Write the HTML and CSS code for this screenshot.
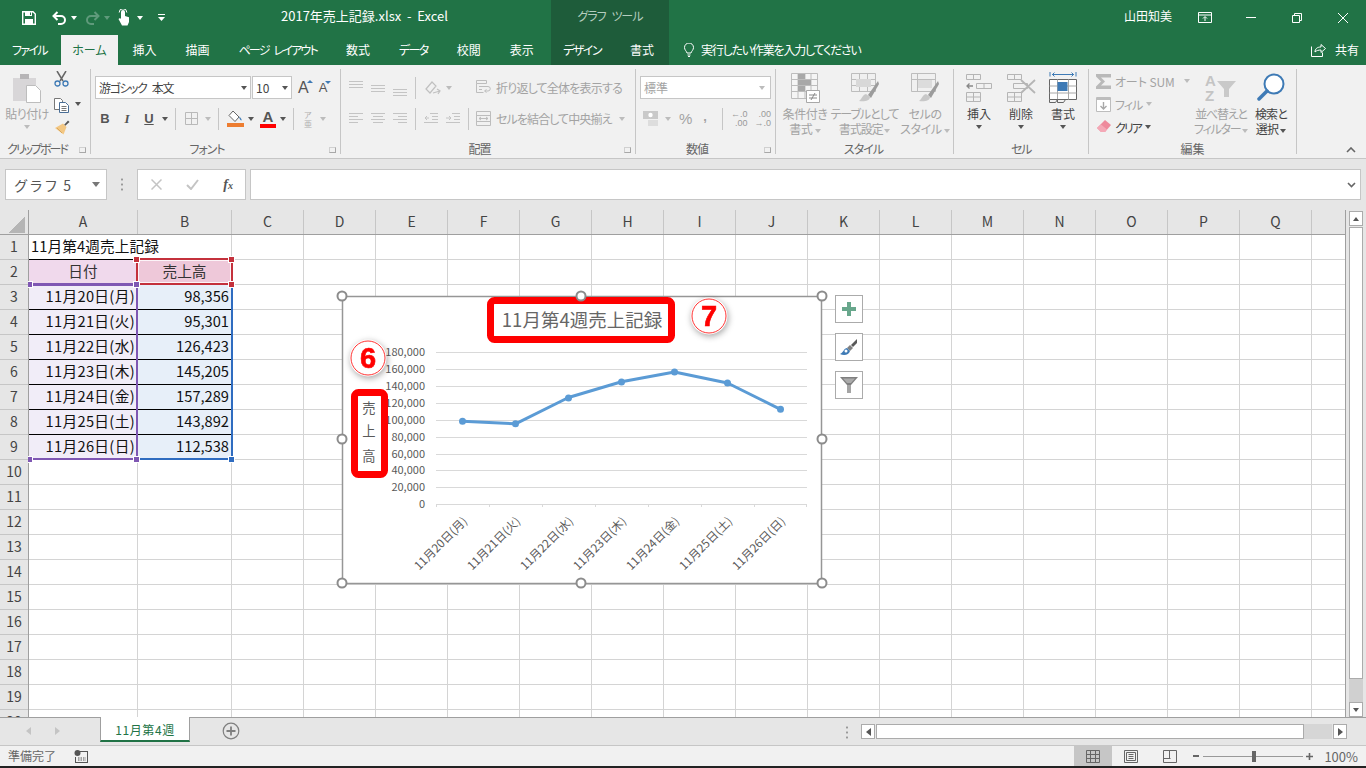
FILE: index.html
```html
<!DOCTYPE html>
<html lang="ja">
<head>
    <meta charset="UTF-8">
    <title>2017年売上記録.xlsx - Excel</title>
    <link rel="stylesheet" href="styles.css">
</head>
<body>
    <header class="titlebar">
        <div class="title-left">
            <svg class="qat-save" width="14" height="14" viewBox="0 0 14 14"><path d="M.7.7H11L13.3 3V13.3H.7Z" fill="none" stroke="#fff" stroke-width="1.4"/><path d="M3 1h7v4H3zM3 8h8v5H3z" fill="#fff"/><path d="M8 1.5h1v2.5H8z" fill="#217346"/></svg>
            <svg class="qat-undo" width="14" height="14" viewBox="0 0 14 14"><path d="M5.5 1 1.5 5l4 4M1.5 5H9a3.8 3.8 0 0 1 0 8H6" fill="none" stroke="#fff" stroke-width="2"/></svg>
            <i class="caret white qat-c1"></i>
            <svg class="qat-redo" width="14" height="14" viewBox="0 0 14 14"><path d="M8.500 1l4 4-4 4M12.500 5H5a3.800 3.800 0 0 0 0 8h3" fill="none" stroke="#5f9a7b" stroke-width="2"/></svg>
            <i class="caret dim qat-c2"></i>
            <svg class="qat-touch" width="12" height="17" viewBox="0 0 12 17"><path d="M3 3a2 2 0 0 1 4 0V7l4 1.200V13l-1.500 3.500H4L.5 10 2 9l1 1z" fill="#fff"/><path d="M1.200 3.500a3.800 3.800 0 0 1 7.600 0" fill="none" stroke="#fff"/></svg>
            <i class="caret white qat-c3"></i>
            <svg class="qat-more" width="7" height="8" viewBox="0 0 7 8"><path d="M0 0h7v1H0zM0 3h7L3.500 7z" fill="#fff"/></svg>
            <span class="doc-title">2017年売上記録.xlsx&nbsp; - &nbsp;Excel</span>
        </div>
        <div class="ctx-title">グラフ ツール</div>
        <div class="title-right">
            <span class="user">山田知美</span>
            <span class="winbtn"><svg width="14" height="11" viewBox="0 0 14 11"><path d="M.5.5h13v10H.5zM.5 3h13M7 9V5M5 6.500l2-2 2 2" fill="none" stroke="#fff"/></svg></span>
            <span class="winbtn"><svg width="10" height="1" viewBox="0 0 10 1"><path d="M0 0h10v1H0z" fill="#fff"/></svg></span>
            <span class="winbtn"><svg width="10" height="10" viewBox="0 0 10 10"><path d="M.5 2.500h7v7h-7zM2.500 2.500v-2h7v7h-2" fill="none" stroke="#fff"/></svg></span>
            <span class="winbtn"><svg width="10" height="10" viewBox="0 0 10 10"><path d="M0 0l10 10M10 0 0 10" stroke="#fff"/></svg></span>
        </div>
    </header>

    <nav class="tabs">
        <div class="main-tabs">
            <span class="tab file">ファイル</span>
            <span class="tab active">ホーム</span>
            <span class="tab">挿入</span>
            <span class="tab">描画</span>
            <span class="tab page-tab">ページ レイアウト</span>
            <span class="tab">数式</span>
            <span class="tab data-tab">データ</span>
            <span class="tab">校閲</span>
            <span class="tab">表示</span>
        </div>
        <div class="ctx-tabs">
            <span class="tab design-tab">デザイン</span>
            <span class="tab">書式</span>
        </div>
        <div class="tell-me">
            <svg width="10" height="14" viewBox="0 0 10 14"><path d="M3 10C2.500 8 .5 7 .5 4.500a4.500 4.500 0 0 1 9 0C9.500 7 7.500 8 7 10zM3.500 12h3M4 13.500h2" fill="none" stroke="#fff"/></svg>
            <span>実行したい作業を入力してください</span>
        </div>
        <div class="share">
            <svg width="15" height="14" viewBox="0 0 15 14"><path d="M.5 3.500v10h11v-4M4 9c0-3 2-5 6-5V1.500l4.500 4-4.500 4V7C7.500 7 5.500 7.500 4 9z" fill="none" stroke="#fff"/></svg>
            <span>共有</span>
        </div>
    </nav>

    <section class="ribbon">
        <div class="group g-clip">
            <div class="body row">
                <div class="big w42 off">
                    <svg width="30" height="30" viewBox="0 0 30 30"><path d="M1 5h23v23H1z" fill="#d8d6d8"/><path d="M8 1h9v5H8z" fill="#b7b5b7"/><path d="M14.500 12.500h9l5 5v12h-14z" fill="#fff" stroke="#bdbdbd"/></svg>
                    <span>貼り付け</span>
                    <i class="caret dim mt"></i>
                </div>
                <div class="smallcol">
                    <svg width="15" height="16" viewBox="0 0 15 16"><path d="M3 0l6 10M12 0 6 10" stroke="#666" stroke-width="1.500"/><circle cx="3.500" cy="12.500" r="2.500" fill="none" stroke="#3e7ab5" stroke-width="1.300"/><circle cx="11.500" cy="12.500" r="2.500" fill="none" stroke="#3e7ab5" stroke-width="1.300"/></svg>
                    <div class="row-c">
                        <svg width="15" height="15" viewBox="0 0 15 15"><path d="M.5.500h6l2 2v9h-8z" fill="#fff" stroke="#777"/><path d="M5.500 4.500h6l3 3v7h-9z" fill="#fff" stroke="#4a6e96"/><path d="M7.500 8.500h5M7.500 10.500h5M7.500 12.500h5" stroke="#777"/></svg>
                        <i class="caret dark ml6"></i>
                    </div>
                    <svg width="16" height="15" viewBox="0 0 16 15"><path d="M10 5l4-4.500 1.500 1.500L11 6z" fill="#555"/><path d="M9 3.500l3.500 3.500-3 7.500L1 8z" fill="#f3c783"/><path d="M3 8l5 5" stroke="#d9a85e"/></svg>
                </div>
            </div>
            <div class="label clip-label">クリップボード</div>
            <i class="launcher"></i>
        </div>

        <div class="group g-font">
            <div class="stack">
                <div class="line pl4">
                    <div class="combo font-name"><span>游ゴシック 本文</span><i class="caret dark"></i></div>
                    <div class="combo font-size"><span>10</span><i class="caret dark"></i></div>
                    <span class="grow-a up">A<i></i></span>
                    <span class="grow-a down">A<i></i></span>
                </div>
                <div class="line pl3">
                    <span class="fmt bold">B</span>
                    <span class="fmt ital">I</span>
                    <span class="fmt under">U</span>
                    <i class="caret dark w12"></i>
                    <i class="vsep s1"></i>
                    <svg class="ic-border" width="13" height="13" viewBox="0 0 13 13"><path d="M.5.500h12v12H.5zM6.500.500v12M.5 6.500h12" fill="none" stroke="#b9b9b9"/></svg>
                    <i class="caret dim ml7"></i>
                    <i class="vsep s2"></i>
                    <svg class="ic-fill" width="17" height="17" viewBox="0 0 17 17"><path d="M6 1l6 6-4 4.500-6-6z" fill="#fff" stroke="#666"/><path d="M12 6.500c2 1.500 3 3 2.500 4-1 0-2-1.500-2.500-4z" fill="#3e7ab5"/><path d="M0 13h17v4H0z" fill="#ed7d31"/></svg>
                    <i class="caret dark ml4"></i>
                    <span class="ic-color">A</span>
                    <i class="caret dark ml4"></i>
                    <i class="vsep s3"></i>
                    <span class="ruby">ア<br>亜</span>
                    <i class="caret dim ml8"></i>
                </div>
            </div>
            <div class="label side">フォント</div>
            <i class="launcher"></i>
        </div>

        <div class="group g-align">
            <div class="body row">
                <div class="stack c-align">
                    <div class="line gap8">
                        <svg width="14" height="16" viewBox="0 0 14 16"><path d="M0 1.500h14M0 4.500h14M0 7.500h14" stroke="#c4c4c4"/></svg>
                        <svg width="14" height="16" viewBox="0 0 14 16"><path d="M0 5.500h14M0 8.500h14M0 11.500h14" stroke="#c4c4c4"/></svg>
                        <svg width="14" height="16" viewBox="0 0 14 16"><path d="M0 9.500h14M0 12.500h14M0 15.500h14" stroke="#c4c4c4"/></svg>
                        <i class="vsep"></i>
                        <svg width="17" height="16" viewBox="0 0 17 16"><path d="M2 9l6-7 4 4-6 7zM9 13l7-2M13 9l3 2-2 3" fill="none" stroke="#c0c0c0" stroke-width="1.200"/></svg>
                        <i class="caret dim ml-3"></i>
                    </div>
                    <div class="line gap8">
                        <svg width="14" height="13" viewBox="0 0 14 13"><path d="M0 1.500h14M0 4.500h9M0 7.500h14M0 10.500h9" stroke="#c4c4c4"/></svg>
                        <svg width="14" height="13" viewBox="0 0 14 13"><path d="M0 1.500h14M2 4.500h10M0 7.500h14M2 10.500h10" stroke="#c4c4c4"/></svg>
                        <svg width="14" height="13" viewBox="0 0 14 13"><path d="M0 1.500h14M5 4.500h9M0 7.500h14M5 10.500h9" stroke="#c4c4c4"/></svg>
                        <i class="vsep"></i>
                        <svg width="14" height="13" viewBox="0 0 14 13"><path d="M6 1.500h8M8 4.500h6M8 7.500h6M0 10.500h14M5 6H1M3 4 1 6l2 2" fill="none" stroke="#c4c4c4"/></svg>
                        <svg width="14" height="13" viewBox="0 0 14 13"><path d="M6 1.500h8M8 4.500h6M8 7.500h6M0 10.500h14M0 6h4M3 4l2 2-2 2" fill="none" stroke="#c4c4c4"/></svg>
                        <i class="vsep"></i>
                    </div>
                </div>
                <div class="stack">
                    <div class="line off txt12">
                        <svg class="mr5" width="15" height="15" viewBox="0 0 15 15"><path d="M.5.500h10v3H.5zM.5 3.500v9h7M3 6.500h9a2 2 0 0 1 0 4.500H9M3 9.500h3M10.500 9.500 8.500 11l2 1.500" fill="none" stroke="#bdbdbd"/></svg>
                        <span class="wrap-text">折り返して全体を表示する</span>
                    </div>
                    <div class="line off txt12">
                        <svg class="mr5" width="15" height="15" viewBox="0 0 15 15"><path d="M.5.500h14v14H.5zM.5 4.500h14M.5 10.500h14M3 7.500h9M5 6 3 7.500 5 9M10 6l2 1.500L10 9" fill="none" stroke="#bdbdbd"/></svg>
                        <span class="merge-text">セルを結合して中央揃え</span>
                        <i class="caret dim ml7"></i>
                    </div>
                </div>
            </div>
            <div class="label side">配置</div>
            <i class="launcher"></i>
        </div>

        <div class="group g-num">
            <div class="stack">
                <div class="line pl4">
                    <div class="combo num-format off"><span>標準</span><i class="caret dim"></i></div>
                </div>
                <div class="line pl7 off">
                    <svg width="16" height="15" viewBox="0 0 16 15"><path d="M0 0h15v8H0z" fill="#c9c9c9"/><circle cx="7.500" cy="4" r="2.200" fill="#fff"/><path d="M5 10h10M5 12h10M5 14h10" stroke="#c9c9c9"/></svg>
                    <i class="caret dim ml6"></i>
                    <span class="pct">%</span>
                    <span class="comma">,</span>
                    <i class="vsep s4"></i>
                    <span class="dec">←.0<br>.00</span>
                    <span class="dec d2">.00<br>→.0</span>
                </div>
            </div>
            <div class="label side">数値</div>
            <i class="launcher"></i>
        </div>

        <div class="group g-style">
            <div class="body row">
                <div class="big w54 off">
                    <svg width="30" height="30" viewBox="0 0 30 30"><path d="M1.500.500h26v25h-26zM1.500 6.500h26M1.500 12.500h26M1.500 18.500h26M8 .500v25M15 .500v25M21 .500v25" fill="#f5f5f5" stroke="#bdbdbd"/><path d="M8 1h7v5H8zM8 7h13v5H8zM8 13h7v5H8z" fill="#a8a8a8"/><path d="M16.500 17.500h13v12h-13z" fill="#fff" stroke="#a8a8a8"/><path d="M19 22h8M19 25h8M25 20l-4 7" stroke="#888" fill="none"/></svg>
                    <span>条件付き<br>書式 <i class="caret dim"></i></span>
                </div>
                <div class="big w65 off">
                    <svg width="30" height="30" viewBox="0 0 30 30"><path d="M1.500.500h24v18h-24zM1.500 6.500h24M1.500 12.500h24M9.500.500v18M17.500.500v18" fill="#f0f0f0" stroke="#bdbdbd"/><path d="M6 6h15v8H6z" fill="#d8d8d8"/><path d="M28 8 18 22l3 3 8-14z" fill="#9c9c9c"/><path d="M16 21c-4 1-4 5-7 7 5 1 11 0 11-4z" fill="#c8c8c8"/></svg>
                    <span class="table-label">テーブルとして<br>書式設定 <i class="caret dim"></i></span>
                </div>
                <div class="big w56 off">
                    <svg width="30" height="30" viewBox="0 0 30 30"><path d="M1.500.500h24v18h-24zM1.500 6.500h24M7.500.500v18" fill="#f0f0f0" stroke="#bdbdbd"/><path d="M8 7h14v8H8z" fill="#dcdcdc"/><path d="M28 8 18 22l3 3 8-14z" fill="#9c9c9c"/><path d="M16 21c-4 1-4 5-7 7 5 1 11 0 11-4z" fill="#c8c8c8"/></svg>
                    <span>セルの<br>スタイル <i class="caret dim"></i></span>
                </div>
            </div>
            <div class="label">スタイル</div>
        </div>

        <div class="group g-cell">
            <div class="body row">
                <div class="big w42">
                    <svg width="30" height="30" viewBox="0 0 30 30"><path d="M2.500 1.500h14v5h-14zM9.500 1.500v5M2.500 19.500h14v9h-14zM9.500 19.500v9M2.500 24h14M12.500 10.500h15v5h-15zM20 10.500v5" fill="none" stroke="#b5b5b5"/><path d="M9 13H3M5.500 10.500 3 13l2.500 2.500" fill="none" stroke="#888" stroke-width="1.300"/></svg>
                    <span>挿入</span>
                    <i class="caret dark mt"></i>
                </div>
                <div class="big w42">
                    <svg width="30" height="30" viewBox="0 0 30 30"><path d="M1.500 1.500h14v5h-14zM8.500 1.500v5M1.500 19.500h14v9h-14zM8.500 19.500v9M1.500 24h14M7.500 10.500h14v5h-14z" fill="none" stroke="#b5b5b5"/><path d="M15 7l14 13M29 7 15 20" stroke="#b5b5b5" stroke-width="1.800"/></svg>
                    <span>削除</span>
                    <i class="caret dark mt"></i>
                </div>
                <div class="big w42 cell-format">
                    <svg width="28" height="33" viewBox="0 0 28 33"><path d="M1 5.500V1M27 5.500V1M3 3.500h22M5.500 1.500l-2 2 2 2M22.500 1.500l2 2-2 2" fill="none" stroke="#3e7ab5"/><path d="M.5 8.500h27v20H.5z" fill="#fff" stroke="#666"/><path d="M8.500 8.500v20M19.500 8.500v20M.5 15h27M.5 22h27" stroke="#a8a8a8"/><path d="M8.500 11h10v9h-10z" fill="#3e7ab5"/><path d="M.5 28.500v3h6l2-3M8.500 28.500v3h6l2-3" fill="none" stroke="#666"/></svg>
                    <span>書式</span>
                    <i class="caret dark mt"></i>
                </div>
            </div>
            <div class="label">セル</div>
        </div>

        <div class="group g-edit">
            <div class="body row">
                <div class="editcol">
                    <div class="eline off">
                        <svg class="sigma" width="15" height="15" viewBox="0 0 15 15"><path d="M0 0h15v3.500H5L9 7.500 5 11.500h10V15H0v-2.500L5 7.500 0 2.500z" fill="#b9b9b9"/></svg>
                        <span class="autosum">オート SUM</span>
                        <i class="caret dim ml9"></i>
                    </div>
                    <div class="eline off">
                        <svg class="sigma" width="15" height="15" viewBox="0 0 15 15"><path d="M.5.500h14v14H.5z" fill="#fff" stroke="#bdbdbd"/><path d="M1 1h13v2H1z" fill="#bdbdbd"/><path d="M7.500 5v7M4.500 9l3 3 3-3" fill="none" stroke="#a8a8a8" stroke-width="1.400"/></svg>
                        <span class="fill-text">フィル</span>
                        <i class="caret dim ml4"></i>
                    </div>
                    <div class="eline">
                        <svg class="sigma" width="15" height="14" viewBox="0 0 15 14"><path d="M9 0l6 5-6 7H5L1 8z" fill="#ee8a9c"/><path d="M1 8l4 4h4l2-2.500-6-5z" fill="#f4a8b6"/></svg>
                        <span class="clear-text">クリア</span>
                        <i class="caret dark ml4"></i>
                    </div>
                </div>
                <div class="big w56 off">
                    <svg width="32" height="30" viewBox="0 0 32 30"><text x="0" y="13" class="sort-letter">A</text><text x="0" y="28" class="sort-letter">Z</text><path d="M12 8h19l-7 8v8h-5v-8z" fill="#c9c9c9"/></svg>
                    <span class="sort-label">並べ替えと<br>フィルター <i class="caret dim"></i></span>
                </div>
                <div class="big w44">
                    <svg width="28" height="30" viewBox="0 0 28 30"><circle cx="17" cy="11" r="9.500" fill="#fff" stroke="#3e7ab5" stroke-width="2"/><path d="M10 18 2 26" stroke="#3e7ab5" stroke-width="3.500" stroke-linecap="round"/></svg>
                    <span class="search-label">検索と<br>選択 <i class="caret dark"></i></span>
                </div>
            </div>
            <div class="label">編集</div>
        </div>

        <svg class="collapse" width="10" height="6" viewBox="0 0 10 6"><path d="M1 5l4-4 4 4" fill="none" stroke="#666" stroke-width="1.600"/></svg>
    </section>

    <div class="formula-row">
        <div class="namebox"><span>グラフ 5</span><i class="caret dark"></i></div>
        <div class="dots"></div>
        <div class="fbtns">
            <svg width="11" height="11" viewBox="0 0 11 11"><path d="M.5.500l10 10M10.500.500l-10 10" stroke="#c4c4c4" stroke-width="1.500"/></svg>
            <svg width="13" height="11" viewBox="0 0 13 11"><path d="M1 6l4 4 7-9" fill="none" stroke="#c4c4c4" stroke-width="2"/></svg>
            <span class="fx">f<small>x</small></span>
        </div>
        <div class="finput"><svg width="9" height="6" viewBox="0 0 9 6"><path d="M1 1l3.500 3.500L8 1" fill="none" stroke="#666" stroke-width="1.600"/></svg></div>
    </div>

    <main class="book">
        <div class="grid">
            <div class="colhead">
                <div class="corner"></div>
                <div class="col a">A</div>
                <div class="col b">B</div>
                <div class="col">C</div>
                <div class="col">D</div>
                <div class="col">E</div>
                <div class="col">F</div>
                <div class="col">G</div>
                <div class="col">H</div>
                <div class="col">I</div>
                <div class="col">J</div>
                <div class="col">K</div>
                <div class="col">L</div>
                <div class="col">M</div>
                <div class="col">N</div>
                <div class="col">O</div>
                <div class="col">P</div>
                <div class="col">Q</div>
                <div class="col"></div>
            </div>
            <div class="sheet">
                <div class="rowhead">
                    <div>1</div><div>2</div><div>3</div><div>4</div><div>5</div>
                    <div>6</div><div>7</div><div>8</div><div>9</div><div>10</div>
                    <div>11</div><div>12</div><div>13</div><div>14</div><div>15</div>
                    <div>16</div><div>17</div><div>18</div><div>19</div><div>20</div>
                </div>
                <div class="data">
                    <div class="cell title-cell">11月第4週売上記録</div><div class="cell blackb"></div>
                    <div class="cell head-a">日付</div><div class="cell head-b">売上高</div>
                    <div class="cell date">11月20日(月)</div><div class="cell num">98,356</div>
                    <div class="cell date">11月21日(火)</div><div class="cell num">95,301</div>
                    <div class="cell date">11月22日(水)</div><div class="cell num">126,423</div>
                    <div class="cell date">11月23日(木)</div><div class="cell num">145,205</div>
                    <div class="cell date">11月24日(金)</div><div class="cell num">157,289</div>
                    <div class="cell date">11月25日(土)</div><div class="cell num">143,892</div>
                    <div class="cell date">11月26日(日)</div><div class="cell num">112,538</div>
                    <div class="cell"></div><div class="cell"></div>
                    <div class="cell"></div><div class="cell"></div>
                    <div class="cell"></div><div class="cell"></div>
                    <div class="cell"></div><div class="cell"></div>
                    <div class="cell"></div><div class="cell"></div>
                    <div class="cell"></div><div class="cell"></div>
                    <div class="cell"></div><div class="cell"></div>
                    <div class="cell"></div><div class="cell"></div>
                    <div class="cell"></div><div class="cell"></div>
                    <div class="cell"></div><div class="cell"></div>
                    <div class="cell"></div><div class="cell"></div>
                </div>
                <div class="blank"></div>
            </div>

            <!-- range highlights of the selected chart -->
            <div class="rng red-box"></div>
            <div class="rng purple-h"></div>
            <div class="rng purple-v"></div>
            <div class="rng purple-b"></div>
            <div class="rng blue-v"></div>
            <div class="rng blue-b"></div>
            <i class="hdl red h1"></i><i class="hdl red h2"></i><i class="hdl red h3"></i>
            <i class="hdl purple h4"></i><i class="hdl purple h5"></i><i class="hdl purple h6"></i><i class="hdl purple h7"></i>
            <i class="hdl blue h8"></i>

            <svg class="chart" width="540" height="310" viewBox="330 285 540 310">
                <rect x="342.500" y="296.500" width="479" height="287" fill="#fff" stroke="#969696" stroke-width="1.500"/>
                <path class="gridline" d="M436 352.500h371M436 369.500h371M436 386.500h371M436 403.500h371M436 420.500h371M436 437.500h371M436 454.500h371M436 470.500h371M436 487.500h371M436 504.500h371M436.500 504v3M489.500 504v3M542.500 504v3M595.500 504v3M648.500 504v3M701.500 504v3M754.500 504v3M806.500 504v3"/>
                <g class="ytick">
                    <text x="425" y="356">180,000</text>
                    <text x="425" y="373">160,000</text>
                    <text x="425" y="390">140,000</text>
                    <text x="425" y="407">120,000</text>
                    <text x="425" y="424">100,000</text>
                    <text x="425" y="441">80,000</text>
                    <text x="425" y="458">60,000</text>
                    <text x="425" y="474">40,000</text>
                    <text x="425" y="491">20,000</text>
                    <text x="425" y="508">0</text>
                </g>
                <polyline class="series" points="462.500,421.200 515.500,423.800 568.500,397.500 621.500,381.700 674.500,372 727.500,383 780.500,409.300"/>
                <g class="dots-s">
                    <circle cx="462.500" cy="421.200" r="3.500"/><circle cx="515.500" cy="423.800" r="3.500"/><circle cx="568.500" cy="398" r="3.500"/><circle cx="621.500" cy="382" r="3.500"/><circle cx="674.500" cy="372" r="3.500"/><circle cx="727.500" cy="383" r="3.500"/><circle cx="780.500" cy="409.300" r="3.500"/>
                </g>
                <g class="xtick">
                    <text transform="translate(468 522) rotate(-45)">11月20日(月)</text>
                    <text transform="translate(521 522) rotate(-45)">11月21日(火)</text>
                    <text transform="translate(574 522) rotate(-45)">11月22日(水)</text>
                    <text transform="translate(627 522) rotate(-45)">11月23日(木)</text>
                    <text transform="translate(680 522) rotate(-45)">11月24日(金)</text>
                    <text transform="translate(733 522) rotate(-45)">11月25日(土)</text>
                    <text transform="translate(786 522) rotate(-45)">11月26日(日)</text>
                </g>
                <text class="chart-title" x="582" y="327">11月第4週売上記録</text>
                <g class="axis-title">
                    <text x="369" y="413">売</text>
                    <text x="369" y="436">上</text>
                    <text x="369" y="461">高</text>
                </g>
                <rect class="mark" x="490.500" y="300.500" width="181" height="39" rx="4"/>
                <rect class="mark" x="354.500" y="392.500" width="30" height="82" rx="4"/>
                <g class="badge">
                    <circle cx="368" cy="358" r="18.500" fill="#fff"/>
                    <circle cx="368" cy="358" r="17" fill="none" stroke="#f00" stroke-width=".8"/>
                    <text x="368" y="368">6</text>
                </g>
                <g class="badge">
                    <circle cx="709" cy="316" r="18.500" fill="#fff"/>
                    <circle cx="709" cy="316" r="17" fill="none" stroke="#f00" stroke-width=".8"/>
                    <text x="709" y="326">7</text>
                </g>
                <g class="handles">
                    <circle cx="342" cy="296" r="4.500"/><circle cx="581" cy="296" r="4.500"/><circle cx="822" cy="296" r="4.500"/>
                    <circle cx="342" cy="439" r="4.500"/><circle cx="822" cy="439" r="4.500"/>
                    <circle cx="342" cy="583" r="4.500"/><circle cx="581" cy="583" r="4.500"/><circle cx="822" cy="583" r="4.500"/>
                </g>
            </svg>

            <div class="chart-tools">
                <div class="chart-tool"><svg width="14" height="14" viewBox="0 0 14 14"><path d="M5 0h4v5h5v4H9v5H5V9H0V5h5z" fill="#68a78c"/></svg></div>
                <div class="chart-tool"><svg width="18" height="18" viewBox="0 0 18 18"><path d="M11 7l6-6v4l-4 4z" fill="#595959"/><path d="M10 7l3 3-3 3-3-3z" fill="#7f7f7f"/><path d="M7 10c-3 0-3 4-7 6 4 2 9 1 10-3z" fill="#3e7ab5"/><circle cx="6" cy="13" r="1.500" fill="#fff"/></svg></div>
                <div class="chart-tool"><svg width="18" height="18" viewBox="0 0 18 18"><path d="M0 1h18l-7 8v8H7V9z" fill="#7f7f7f"/><path d="M7 9h4v8H7z" fill="#a5a5a5"/><path d="M3 2.500h12l-4 4.500H7z" fill="#fff" opacity=".35"/></svg></div>
            </div>
        </div>
        <div class="vscroll">
            <div class="sbtn"><i class="caret-up"></i></div>
            <div class="thumb"></div>
            <div class="track"></div>
            <div class="sbtn"><i class="caret dark"></i></div>
        </div>
    </main>

    <div class="sheetbar">
        <div class="sheetnav"><i class="nav-l"></i><i class="nav-r"></i></div>
        <div class="sheet-tab">11月第4週</div>
        <svg class="add-sheet" width="18" height="18" viewBox="0 0 18 18"><circle cx="9" cy="9" r="7.800" fill="none" stroke="#7f7f7f" stroke-width="1.200"/><path d="M9 4.500v9M4.500 9h9" stroke="#7f7f7f" stroke-width="1.800"/></svg>
        <div class="dots small"></div>
        <div class="hscroll">
            <div class="hbtn"><i class="nav-l dark"></i></div>
            <div class="hthumb"></div>
            <div class="htrack"></div>
            <div class="hbtn"><i class="nav-r dark"></i></div>
        </div>
    </div>

    <footer class="status">
        <span class="ready">準備完了</span>
        <svg class="macro" width="14" height="13" viewBox="0 0 14 13"><circle cx="3.500" cy="3" r="3" fill="#555"/><path d="M6 1h8v12H1V7h1v5h11V2H6z" fill="#555"/><path d="M4 8h8M4 10h8" stroke="#555" stroke-dasharray="1.500 1"/></svg>
        <div class="views">
            <span class="view on"><svg width="14" height="13" viewBox="0 0 14 13"><path d="M.5.500h13v12H.5zM.5 4.500h13M.5 8.500h13M4.500.500v12M9.500.500v12" fill="none" stroke="#666"/></svg></span>
            <span class="view v2"><svg width="14" height="13" viewBox="0 0 14 13"><path d="M.5.500h13v12H.5zM2.500 2.500h9v8h-9zM4.500 4.500h5M4.500 6.500h5M4.500 8.500h5" fill="none" stroke="#666"/></svg></span>
            <span class="view v3"><svg width="14" height="13" viewBox="0 0 14 13"><path d="M.5.500h13v12H.5zM.5 8.500h7M6.500.500v8" fill="none" stroke="#666"/></svg></span>
        </div>
        <div class="zoom">
            <i class="z-minus"></i>
            <div class="slider"><i></i></div>
            <svg class="z-plus" width="7" height="7" viewBox="0 0 7 7"><path d="M3.500 0v7M0 3.500h7" stroke="#666" stroke-width="1.600"/></svg>
            <span class="pct-zoom">100%</span>
        </div>
    </footer>
    <div class="edge"></div>
</body>
</html>
```

FILE: styles.css
```css
* {
    box-sizing: border-box;
}

body {
    margin: 0;
    width: 1366px;
    height: 768px;
    overflow: hidden;
    display: flex;
    flex-direction: column;
    font-family: "Noto Sans CJK JP", sans-serif;
    font-size: 12px;
    color: #444;
    background: #e6e6e6;
}

i {
    display: block;
    font-style: normal;
}

/* small triangles */
.caret {
    display: inline-block;
    width: 0;
    height: 0;
    border-left: 3.5px solid transparent;
    border-right: 3.5px solid transparent;
    border-top: 4px solid #666;
    flex: none;
    vertical-align: middle;
}
.caret.white { border-top-color: #fff; }
.caret.dim { border-top-color: #bcbcbc; }
.titlebar .caret.dim { border-top-color: #5f9a7b; }
.caret.dark { border-top-color: #555; }
.mt { margin-top: 5px; }
.ml4 { margin-left: 4px; }
.ml5 { margin-left: 5px; }
.ml6 { margin-left: 6px; }
.ml7 { margin-left: 7px; }
.ml8 { margin-left: 8px; }
.ml9 { margin-left: 9px; }
.ml-3 { margin-left: -3px; }
.mr5 { margin-right: 5px; flex: none; }

/* title bar */
.titlebar {
    height: 35px;
    flex: none;
    background: #217346;
    color: #fff;
    display: grid;
    grid-template-columns: 551px 118px 1fr;
}
.title-left {
    display: flex;
    align-items: center;
    padding-left: 22px;
}
.qat-undo { margin-left: 16px; }
.qat-c1 { margin-left: 5px; }
.qat-redo { margin-left: 9px; }
.qat-c2 { margin-left: 4px; }
.qat-touch { margin-left: 8px; }
.qat-c3 { margin-left: 7px; }
.qat-more { margin-left: 15px; }
.doc-title {
    margin: 0 0 4px 116px;
    font-size: 13px;
    white-space: nowrap;
}
.ctx-title {
    background: #1e5c3a;
    color: #b5cdbf;
    display: flex;
    align-items: center;
    justify-content: center;
    padding-bottom: 4px;
    font-size: 12px;
    letter-spacing: -1px;
    word-spacing: 4px;
    font-feature-settings: "palt";
}
.title-right {
    display: flex;
    align-items: center;
    justify-content: flex-end;
}
.user {
    margin: 0 10px 4px 0;
    font-size: 12px;
}
.winbtn {
    width: 46px;
    height: 35px;
    display: flex;
    align-items: center;
    justify-content: center;
}

/* tabs */
.tabs {
    height: 30px;
    flex: none;
    background: #217346;
    color: #fff;
    display: flex;
    font-feature-settings: "palt";
}
.main-tabs {
    width: 551px;
    flex: none;
    display: flex;
}
.tab {
    padding: 0 14.5px 2px;
    display: flex;
    align-items: center;
    white-space: nowrap;
}
.tab.file {
    width: 61px;
    padding: 0 0 2px 12px;
    letter-spacing: -1.7px;
}
.tab.active {
    width: 57px;
    padding: 0 0 2px;
    justify-content: center;
    background: #f1f1f1;
    color: #217346;
}
.page-tab { letter-spacing: -1.8px; word-spacing: 4px; }
.data-tab { letter-spacing: -1.6px; }
.design-tab { letter-spacing: -1.5px; padding-left: 12px; }
.ctx-tabs {
    width: 118px;
    flex: none;
    background: #1e5c3a;
    display: flex;
}
.tell-me {
    margin-left: 15px;
    display: flex;
    align-items: center;
    gap: 7px;
    letter-spacing: -1.2px;
}
.tell-me span { margin-bottom: 2px; }
.share {
    margin-left: auto;
    margin-right: 7px;
    display: flex;
    align-items: center;
    gap: 9px;
}
.share span { margin-bottom: 2px; }

/* ribbon */
.ribbon {
    position: relative;
    height: 94px;
    flex: none;
    display: flex;
    padding-top: 4px;
    background: #f1f1f1;
    border-bottom: 1px solid #c6c6c6;
    font-feature-settings: "palt";
}
.group {
    position: relative;
    height: 85px;
    display: flex;
    flex-direction: column;
    border-right: 1px solid #c6c6c6;
}
.g-clip { width: 91px; padding-left: 6px; }
.g-font { width: 250px; }
.g-align { width: 295px; }
.g-num { width: 140px; }
.g-style { width: 178px; padding-left: 2px; }
.g-cell { width: 135px; padding-left: 4px; }
.g-edit { width: 208px; padding-left: 7px; }
.body {
    height: 73px;
    flex: none;
}
.row {
    display: flex;
}
.label {
    margin-top: auto;
    height: 14px;
    margin-bottom: -2px;
    line-height: 14px;
    text-align: center;
    color: #666;
    white-space: nowrap;
}
.label.side { padding-right: 17px; letter-spacing: -1px; }
.label.clip-label {
    text-align: left;
    padding-left: 1px;
    letter-spacing: -2px;
}
.g-style .label { margin-left: -4px; letter-spacing: -1px; }
.g-cell .label { margin-left: -4px; letter-spacing: -1.5px; }
.g-edit .label { margin-left: -7px; }
.launcher {
    position: absolute;
    right: 4px;
    bottom: 1px;
    width: 7px;
    height: 6px;
    border: 1px solid #a8a8a8;
    border-top-color: #d0d0d0;
    border-left-color: #d0d0d0;
}
.big {
    display: flex;
    flex-direction: column;
    align-items: center;
    padding-top: 4px;
    line-height: 15px;
    text-align: center;
    white-space: nowrap;
}
.big > span {
    margin-top: 3px;
}
.big > i.mt { margin-top: 4px; }
.g-clip .big > span { letter-spacing: -.5px; }
.g-style .big > span { letter-spacing: -.4px; }
.g-style .big > .table-label { letter-spacing: -1px; }
.sort-label { letter-spacing: -1.2px; }
.search-label { letter-spacing: -.8px; }
.cell-format { padding-top: 2px; }
.cell-format > span { margin-top: 2px; }
.w42 { width: 42px; flex: none; }
.w44 { width: 44px; flex: none; }
.w54 { width: 54px; flex: none; }
.w56 { width: 56px; flex: none; }
.w65 { width: 65px; flex: none; }
.off { color: #a3a3a3; }
.smallcol {
    margin: -1px 0 0 6px;
    display: flex;
    flex-direction: column;
    gap: 9px;
    align-items: flex-start;
}
.row-c {
    display: flex;
    align-items: center;
    height: 15px;
}
.smallcol svg:first-child { margin-top: 3px; }

.stack {
    padding-top: 7px;
    display: flex;
    flex-direction: column;
    gap: 8px;
    height: 73px;
}
.line {
    height: 23px;
    display: flex;
    align-items: center;
}
.pl3 { padding-left: 3px; }
.pl4 { padding-left: 4px; }
.pl7 { padding-left: 7px; }
.gap8 { gap: 8px; }
.vsep {
    width: 1px;
    height: 22px;
    background: #c6c6c6;
    flex: none;
}
.combo {
    height: 23px;
    display: flex;
    align-items: center;
    justify-content: space-between;
    padding: 0 3px;
    background: #fff;
    border: 1px solid #c6c6c6;
    color: #444;
}
.font-name { width: 156px; letter-spacing: -1.4px; word-spacing: 4px; }
.font-name .caret { margin-right: 0; }
.font-size { width: 40px; margin-left: 1px; }
.num-format { width: 131px; color: #a3a3a3; }
.num-format .caret { margin-right: 2px; }
.grow-a {
    position: relative;
    font-family: "Liberation Sans", sans-serif;
    color: #555;
    line-height: 1;
}
.grow-a i {
    position: absolute;
    right: -4px;
    top: 0;
    width: 0;
    height: 0;
    border-left: 3px solid transparent;
    border-right: 3px solid transparent;
}
.grow-a.up { font-size: 16px; margin-left: 6px; }
.grow-a.up i { border-bottom: 3px solid #3e7ab5; }
.grow-a.down { font-size: 13px; margin-left: 10px; }
.grow-a.down i { border-top: 3px solid #3e7ab5; }

.fmt {
    width: 22px;
    text-align: center;
    font-family: "Liberation Sans", sans-serif;
    font-size: 13px;
    color: #555;
    flex: none;
}
.bold { font-weight: bold; }
.ital { font-style: italic; font-family: "Liberation Serif", serif; font-weight: bold; }
.under { text-decoration: underline; font-weight: bold; }
.w12 { margin: 0 3px 0 2px; }
.s1 { margin-left: 4px; }
.ic-border { margin-left: 9px; }
.s2 { margin-left: 7px; }
.ic-fill { margin-left: 8px; flex: none; }
.ic-color {
    margin-left: 6px;
    width: 16px;
    height: 18px;
    text-align: center;
    font-family: "Liberation Sans", sans-serif;
    font-weight: bold;
    font-size: 15px;
    line-height: 14px;
    color: #555;
    border-bottom: 4px solid #f00;
}
.s3 { margin-left: 7px; }
.ruby {
    margin-left: 10px;
    font-size: 8px;
    line-height: 9px;
    color: #b0b0b0;
}
.c-align {
    padding-left: 8px;
    width: 135px;
    flex: none;
}
.wrap-text { white-space: nowrap; letter-spacing: -.8px; }
.merge-text { white-space: nowrap; letter-spacing: -.9px; }
.pct {
    margin-left: 8px;
    font-size: 15px;
    font-family: "Liberation Sans", sans-serif;
}
.comma {
    margin: 0 0 4px 11px;
    font-family: "Liberation Sans", sans-serif;
    font-size: 13px;
    font-weight: bold;
    line-height: 12px;
}
.s4 { margin-left: 15px; }
.dec {
    margin-left: 8px;
    font-size: 9px;
    line-height: 9px;
    text-align: right;
    font-family: "Liberation Sans", sans-serif;
    color: #999;
}
.dec.d2 { margin-left: 7px; }
.editcol {
    width: 97px;
    flex: none;
    margin-top: 1px;
    display: flex;
    flex-direction: column;
    gap: 1px;
}
.eline {
    height: 22px;
    display: flex;
    align-items: center;
    white-space: nowrap;
}
.sigma { margin-right: 4px; flex: none; }
.autosum { letter-spacing: -.1px; }
.fill-text { letter-spacing: -1px; }
.clear-text { color: #444; letter-spacing: -2px; }
.sort-letter {
    font-family: "Liberation Sans", sans-serif;
    font-weight: bold;
    font-size: 15px;
    fill: #c4c4c4;
}
.collapse {
    position: absolute;
    left: 1346px;
    top: 82px;
}

/* formula bar */
.formula-row {
    height: 51px;
    flex: none;
    padding: 10px 5px;
    display: flex;
    background: #e6e6e6;
}
.namebox {
    width: 102px;
    display: flex;
    align-items: center;
    justify-content: space-between;
    padding: 0 6px 0 8px;
    background: #fff;
    border: 1px solid #c6c6c6;
    font-size: 14px;
    letter-spacing: 1px;
    color: #555;
}
.namebox .caret { border-left-width: 4px; border-right-width: 4px; border-top-width: 5px; border-top-color: #777; }
.dots {
    width: 30px;
    flex: none;
    background: radial-gradient(circle, #999 1px, transparent 1.2px) center / 2px 5px repeat-y;
    background-size: 4px 5px;
    margin: 8px 0;
}
.fbtns {
    width: 109px;
    display: flex;
    align-items: center;
    justify-content: space-between;
    padding: 0 12px 0 13px;
    background: #fff;
    border: 1px solid #c6c6c6;
}
.fx {
    font-family: "Liberation Serif", serif;
    font-style: italic;
    font-weight: bold;
    font-size: 14px;
    color: #555;
}
.fx small { font-size: 10px; }
.finput {
    width: 1111px;
    margin-left: 4px;
    display: flex;
    align-items: center;
    justify-content: flex-end;
    padding-right: 4px;
    background: #fff;
    border: 1px solid #c6c6c6;
}

/* sheet */
.book {
    height: 507px;
    flex: none;
    display: flex;
    position: relative;
}
.grid {
    position: relative;
    width: 1346px;
    flex: none;
    overflow: hidden;
    background: #fff;
    border-right: 1px solid #9f9f9f;
}
.colhead {
    height: 25px;
    display: flex;
    background: #e6e6e6;
    border-bottom: 1px solid #9f9f9f;
}
.corner {
    width: 29px;
    flex: none;
    border-right: 1px solid #9f9f9f;
    background: linear-gradient(135deg, #e6e6e6 50%, #b5b5b5 50%) 8px 7px / 17px 16px no-repeat;
}
.col {
    width: 72px;
    flex: none;
    text-align: center;
    line-height: 22px;
    font-size: 14px;
    color: #444;
    border-right: 1px solid #c6c6c6;
}
.col.a { width: 109px; }
.col.b { width: 94px; }
.sheet {
    display: flex;
}
.rowhead {
    width: 29px;
    flex: none;
    background: #e6e6e6;
    border-right: 1px solid #9f9f9f;
}
.rowhead div {
    height: 25px;
    line-height: 22px;
    text-align: center;
    font-size: 14px;
    color: #444;
    border-bottom: 1px solid #c6c6c6;
}
.data {
    width: 203px;
    flex: none;
    display: grid;
    grid-template-columns: 109px 94px;
    grid-auto-rows: 25px;
}
.cell {
    border-right: 1px solid #d4d4d4;
    border-bottom: 1px solid #d4d4d4;
    font-size: 14.67px;
    line-height: 22px;
    color: #111;
    white-space: nowrap;
}
.title-cell {
    padding-left: 2px;
    border-right: 0;
    border-bottom-color: #000;
    letter-spacing: .1px;
}
.blackb { border-bottom-color: #000; }
.head-a, .head-b {
    text-align: center;
    color: #333;
}
.head-a { background: #f0d9ec; }
.head-b { background: #eec8d9; }
.date, .num {
    text-align: right;
    padding-right: 2px;
    border-bottom-color: #000;
}
.date { background: #f1edf8; letter-spacing: .35px; }
.num { background: #e7eff9; }
.blank {
    flex: 1;
    height: 500px;
    background:
        repeating-linear-gradient(to right, transparent 0 71px, #d4d4d4 71px 72px),
        repeating-linear-gradient(to bottom, transparent 0 24px, #d4d4d4 24px 25px);
}

.rng {
    position: absolute;
}
.red-box {
    left: 136px;
    top: 48px;
    width: 97px;
    height: 27px;
    border: 2px solid #c4313c;
    outline: 1px solid rgba(255, 255, 255, .8);
    outline-offset: -3px;
}
.purple-h { left: 29px; top: 73px; width: 108px; height: 3px; background: #7f57b3; }
.purple-v { left: 136px; top: 75px; width: 2px; height: 175px; background: #7f57b3; }
.purple-b { left: 29px; top: 248px; width: 108px; height: 2px; background: #7f57b3; }
.blue-v { left: 231px; top: 76px; width: 2px; height: 174px; background: #2f6cc0; }
.blue-b { left: 139px; top: 248px; width: 93px; height: 2px; background: #2f6cc0; }
.hdl {
    position: absolute;
    width: 7px;
    height: 7px;
    border: 1px solid #fff;
}
.hdl.red { background: #c4313c; }
.hdl.purple { background: #7f57b3; }
.hdl.blue { background: #2f6cc0; }
.h1 { left: 133px; top: 46px; }
.h2 { left: 228px; top: 46px; }
.h3 { left: 228px; top: 71px; }
.h4 { left: 28px; top: 71px; width: 5px; border-left: 0; }
.h5 { left: 133px; top: 71px; }
.h6 { left: 28px; top: 246px; width: 5px; border-left: 0; }
.h7 { left: 133px; top: 246px; }
.h8 { left: 228px; top: 246px; }

/* chart */
.chart {
    position: absolute;
    left: 330px;
    top: 75px;
    overflow: visible;
}
.gridline {
    stroke: #d9d9d9;
    fill: none;
}
.ytick text {
    font-size: 11px;
    fill: #595959;
    text-anchor: end;
}
.xtick text {
    font-size: 11.7px;
    fill: #595959;
    text-anchor: end;
}
.series {
    fill: none;
    stroke: #5b9bd5;
    stroke-width: 3;
    stroke-linecap: round;
    stroke-linejoin: round;
}
.dots-s circle { fill: #5b9bd5; }
.chart-title {
    font-size: 18.5px;
    fill: #666;
    text-anchor: middle;
}
.axis-title text {
    font-size: 13.3px;
    fill: #595959;
    text-anchor: middle;
}
.mark {
    fill: none;
    stroke: #f00;
    stroke-width: 7;
}
.badge {
    filter: drop-shadow(1px 2px 3px rgba(0, 0, 0, .35));
}
.badge text {
    font-family: "Liberation Sans", sans-serif;
    font-weight: bold;
    font-size: 29px;
    fill: #f00;
    stroke: #f00;
    stroke-width: .6;
    text-anchor: middle;
}
.handles circle {
    fill: #fff;
    stroke: #8c8c8c;
    stroke-width: 2;
}
.chart-tools {
    position: absolute;
    left: 835px;
    top: 85px;
    display: flex;
    flex-direction: column;
    gap: 10px;
}
.chart-tool {
    width: 28px;
    height: 28px;
    display: flex;
    align-items: center;
    justify-content: center;
    background: #fff;
    border: 1px solid #ababab;
}

/* scrollbars */
.vscroll {
    width: 20px;
    flex: none;
    padding: 1px 3px 0;
    display: flex;
    flex-direction: column;
    gap: 1px;
}
.sbtn {
    height: 15px;
    flex: none;
    display: flex;
    align-items: center;
    justify-content: center;
    background: #fff;
    border: 1px solid #ababab;
}
.caret-up {
    width: 0;
    height: 0;
    border-left: 3.5px solid transparent;
    border-right: 3.5px solid transparent;
    border-bottom: 4px solid #555;
}
.thumb {
    height: 452px;
    flex: none;
    background: #fff;
    border: 1px solid #ababab;
}
.track {
    flex: 1;
    margin: -1px 0;
    background: #d0d0d0;
}
.sheetbar {
    height: 28px;
    flex: none;
    display: flex;
    background: #e6e6e6;
    border-top: 1px solid #9f9f9f;
}
.sheetnav {
    width: 100px;
    flex: none;
    padding: 9px 0 0 26px;
    display: flex;
    gap: 24px;
    align-items: flex-start;
}
.nav-l, .nav-r {
    width: 0;
    height: 0;
    border-top: 4px solid transparent;
    border-bottom: 4px solid transparent;
}
.nav-l { border-right: 5px solid #c4c4c4; }
.nav-r { border-left: 5px solid #c4c4c4; }
.nav-l.dark { border-right-color: #555; }
.nav-r.dark { border-left-color: #555; }
.sheet-tab {
    width: 90px;
    height: 25px;
    margin-top: -1px;
    text-align: center;
    line-height: 25px;
    color: #217346;
    background: #fff;
    border-left: 1px solid #9f9f9f;
    border-right: 1px solid #9f9f9f;
    border-bottom: 2px solid #217346;
    letter-spacing: .6px;
    flex: none;
}
.add-sheet {
    margin: 4px 0 0 32px;
    flex: none;
}
.dots.small {
    width: 4px;
    margin: 8px 0 6px 605px;
    flex: none;
}
.hscroll {
    margin: 6px 19px 0 auto;
    width: 486px;
    height: 15px;
    display: flex;
    align-items: stretch;
    gap: 1px;
}
.hbtn {
    width: 14px;
    flex: none;
    display: flex;
    align-items: center;
    justify-content: center;
    background: #fff;
    border: 1px solid #ababab;
}
.hthumb {
    width: 428px;
    flex: none;
    background: #fff;
    border: 1px solid #ababab;
}
.htrack {
    flex: 1;
    background: #d6d6d6;
    margin-left: -1px;
}

/* status bar */
.status {
    height: 21px;
    flex: none;
    display: flex;
    align-items: center;
    padding-left: 8px;
    background: #f1f1f1;
    border-top: 1px solid #c6c6c6;
    color: #666;
}
.ready { margin-bottom: 2px; }
.macro { margin-left: 18px; }
.views {
    margin-left: auto;
    display: flex;
    height: 100%;
}
.view {
    display: flex;
    align-items: center;
    justify-content: center;
    height: 100%;
}
.view.on { width: 38px; background: #c6c6c6; }
.view.v2 { margin-left: 12px; width: 14px; }
.view.v3 { margin-left: 25px; width: 14px; }
.zoom {
    margin-left: 16px;
    display: flex;
    align-items: center;
    padding-right: 8px;
}
.z-minus {
    width: 6px;
    height: 2px;
    background: #666;
}
.slider {
    position: relative;
    width: 100px;
    height: 1px;
    margin-left: 4px;
    background: #999;
}
.slider i {
    position: absolute;
    left: 49px;
    top: -5px;
    width: 4px;
    height: 11px;
    background: #666;
}
.z-plus { margin-left: 3px; }
.pct-zoom {
    margin-left: 11px;
    font-size: 13px;
}
.edge {
    height: 2px;
    flex: none;
    background: #222;
}
```
